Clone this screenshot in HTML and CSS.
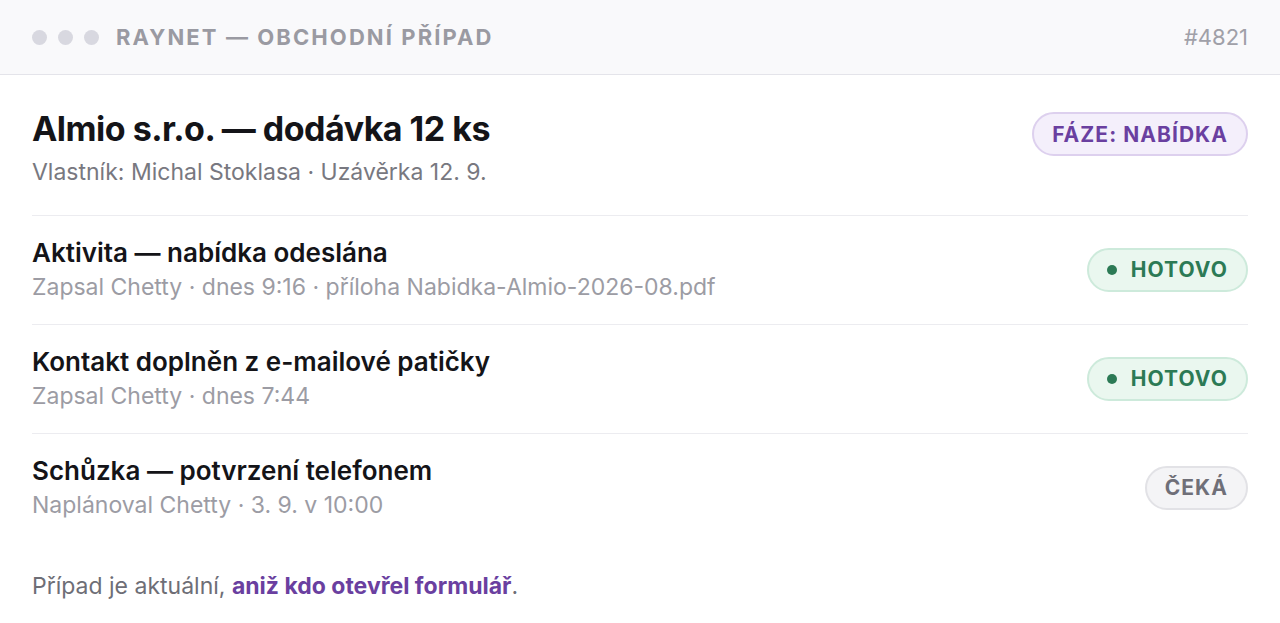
FILE: index.html
```html
<!DOCTYPE html>
<html lang="cs">
<head>
  <meta charset="UTF-8">
  <title>Raynet — obchodní případ</title>
  <link rel="stylesheet" href="styles.css">
</head>
<body>

  <!-- Window bar -->
  <header class="topbar">
    <div class="dots">
      <span class="dot"></span>
      <span class="dot"></span>
      <span class="dot"></span>
    </div>
    <div class="app-title">Raynet — obchodní případ</div>
    <div class="case-id">#4821</div>
  </header>

  <main class="content">
    <!-- Deal summary -->
    <section class="deal">
      <div class="deal-info">
        <h1 class="deal-title">Almio s.r.o. — dodávka 12 ks</h1>
        <p class="deal-meta">Vlastník: Michal Stoklasa · Uzávěrka 12. 9.</p>
      </div>
      <span class="badge badge-phase">Fáze: nabídka</span>
    </section>

    <!-- Activity list -->
    <ul class="activities">
      <li class="activity">
        <div class="activity-info">
          <div class="activity-title">Aktivita — nabídka odeslána</div>
          <div class="activity-meta">Zapsal Chetty · dnes 9:16 · příloha Nabidka-Almio-2026-08.pdf</div>
        </div>
        <span class="badge badge-done"><span class="badge-dot"></span>Hotovo</span>
      </li>
      <li class="activity">
        <div class="activity-info">
          <div class="activity-title">Kontakt doplněn z e-mailové patičky</div>
          <div class="activity-meta">Zapsal Chetty · dnes 7:44</div>
        </div>
        <span class="badge badge-done"><span class="badge-dot"></span>Hotovo</span>
      </li>
      <li class="activity">
        <div class="activity-info">
          <div class="activity-title">Schůzka — potvrzení telefonem</div>
          <div class="activity-meta">Naplánoval Chetty · 3. 9. v 10:00</div>
        </div>
        <span class="badge badge-wait">Čeká</span>
      </li>
    </ul>

    <p class="note">Případ je aktuální, <strong>aniž kdo otevřel formulář</strong>.</p>
  </main>

</body>
</html>
```

FILE: styles.css
```css
body {
  font-family: Inter, "Noto Sans", sans-serif;
  margin: 0;
  background-color: #fff;
  color: #141418;
}

.topbar {
  display: flex;
  align-items: center;
  height: 74px;
  padding: 0 32px;
  background-color: #f9f9fb;
  border-bottom: 1px solid #e4e4ea;
}

.dots {
  display: flex;
  gap: 11px;
  margin-right: 17px;
}

.dot {
  width: 15px;
  height: 15px;
  border-radius: 50%;
  background-color: #d8d8e0;
}

.app-title {
  font-size: 22px;
  font-weight: 700;
  letter-spacing: 0.095em;
  text-transform: uppercase;
  color: #9a9aa2;
}

.case-id {
  margin-left: auto;
  font-size: 22px;
  color: #a0a0a8;
}

.content {
  padding: 0 32px;
}

.deal {
  display: flex;
  align-items: flex-start;
  justify-content: space-between;
  padding: 34px 0 28px;
  border-bottom: 1px solid #ececf0;
}

.deal-title {
  margin: 0;
  font-size: 34px;
  line-height: 40px;
  font-weight: 700;
  letter-spacing: -0.015em;
}

.deal-meta {
  margin: 8px 0 0;
  font-size: 23px;
  line-height: 30px;
  color: #787880;
}

.badge {
  display: inline-flex;
  align-items: center;
  height: 44px;
  box-sizing: border-box;
  padding: 0 18px;
  border-radius: 22px;
  border: 2px solid;
  font-size: 21px;
  font-weight: 700;
  letter-spacing: 0.05em;
  text-transform: uppercase;
  white-space: nowrap;
}

.badge-phase {
  margin-top: 3px;
  background-color: #f4effb;
  border-color: #ddd0ee;
  color: #6a3fa0;
}

.badge-done {
  background-color: #eaf7ef;
  border-color: #cdeadb;
  color: #2c7a55;
}

.badge-dot {
  width: 10px;
  height: 10px;
  border-radius: 50%;
  background-color: #2c7a55;
  margin-right: 14px;
}

.badge-wait {
  background-color: #f4f4f6;
  border-color: #e2e2e6;
  color: #6f6f78;
}

.activities {
  list-style: none;
  margin: 0;
  padding: 0;
}

.activity {
  display: flex;
  align-items: center;
  justify-content: space-between;
  padding: 21px 0 22px;
  border-bottom: 1px solid #ececf0;
}

.activity:last-child {
  border-bottom: none;
}

.activity-title {
  font-size: 26px;
  line-height: 32px;
  font-weight: 600;
}

.activity-meta {
  margin-top: 3px;
  font-size: 23px;
  line-height: 30px;
  color: #9c9ca4;
}

.note {
  margin: 29px 0 0;
  font-size: 23px;
  line-height: 30px;
  color: #6e6e76;
}

.note strong {
  color: #6a3fa0;
  font-weight: 700;
}
```
